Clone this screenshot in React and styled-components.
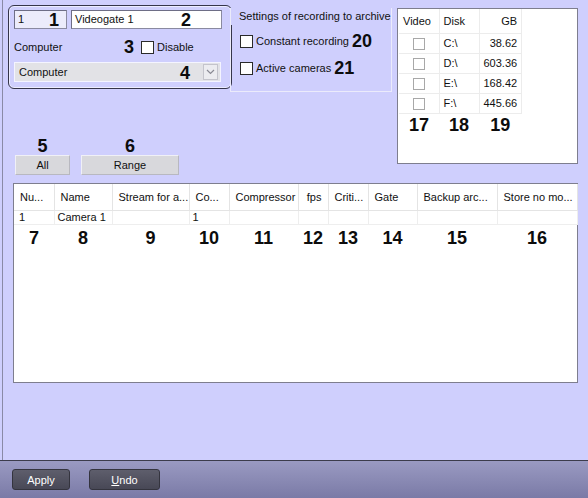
import React from "react";
import styled, { createGlobalStyle } from "styled-components";

const GlobalStyle = createGlobalStyle`
  html, body {
    margin: 0;
    padding: 0;
    background: #cfcffd;
  }
  * {
    box-sizing: border-box;
  }
`;

const Page = styled.div`
  width: 588px;
  height: 498px;
  display: flex;
  flex-direction: column;
  background: #cfcffd;
  font-family: "Liberation Sans", Arial, sans-serif;
  font-size: 11px;
  color: #111;
  overflow: hidden;
`;

const Main = styled.div`
  flex: 1;
  margin-left: 2px;
  border-left: 1px solid #8a8aa6;
  padding: 5px 10px 0 5px;
  display: flex;
  flex-direction: column;
`;

const TopArea = styled.div`
  display: flex;
  align-items: flex-start;
`;

const LeftCol = styled.div`
  display: flex;
  flex-direction: column;
  width: 384px;
`;

const TopRow = styled.div`
  display: flex;
  align-items: flex-start;
`;

const GroupBox = styled.div`
  width: 224px;
  height: 84px;
  border: 1px solid #35354a;
  border-radius: 6px;
  box-shadow: inset 0 0 0 1px #ececff;
  padding: 4px 0 0 5px;
  display: flex;
  flex-direction: column;
`;

const InputRow = styled.div`
  display: flex;
  gap: 4px;
`;

const TextInput = styled.div`
  position: relative;
  width: ${(p) => p.$w}px;
  height: 19px;
  background: ${(p) => (p.$tinted ? "#ececfb" : "#fff")};
  border: 1px solid #8a8aa0;
  border-top-color: #6e6e86;
  border-left-color: #6e6e86;
  padding: 2px 3px;
  font-size: 11px;
  line-height: 13px;
`;

const Num = styled.span`
  font-family: "Liberation Sans", Arial, sans-serif;
  font-weight: bold;
  font-size: 18px;
  line-height: 18px;
  color: #0c0c0c;
`;

const InlineNum = styled(Num)`
  position: absolute;
  right: ${(p) => p.$r}px;
  top: 0px;
`;

const CompRow = styled.div`
  display: flex;
  align-items: center;
  height: 22px;
  margin-top: 7px;
`;

const CompLabel = styled.span`
  width: 110px;
`;

const Check = styled.span`
  display: inline-block;
  width: 13px;
  height: 13px;
  background: #fff;
  border: 1px solid #2a2a2a;
  margin-right: 3px;
  flex-shrink: 0;
`;

const Select = styled.div`
  position: relative;
  width: 207px;
  height: 20px;
  margin-top: 4px;
  background: #e2e2e6;
  border: 1px solid #f4f4ff;
  display: flex;
  align-items: center;
  padding-left: 4px;
`;

const ArrowBox = styled.span`
  position: absolute;
  right: 2px;
  top: 1px;
  width: 15px;
  height: 16px;
  border: 1px solid #c4c4cc;
  background: #ececf0;
  display: flex;
  align-items: center;
  justify-content: center;
`;

const Settings = styled.fieldset`
  margin: 3px 0 0 -2px;
  width: 162px;
  height: 84px;
  border: 1px solid #ebebfb;
  border-top: none;
  padding: 0 0 0 9px;
  min-width: 0;
`;

const Legend = styled.div`
  margin: 0 0 0 -9px;
  padding: 2px 0 0 8px;
  height: 17px;
  white-space: nowrap;
  background: #cfcffd;
`;

const CheckLine = styled.div`
  display: flex;
  align-items: center;
  height: 18px;
  margin-top: ${(p) => p.$mt}px;
  white-space: nowrap;
  span.lbl {
    margin-right: 3px;
  }
`;

const ButtonsRow = styled.div`
  display: flex;
  gap: 11px;
  margin: 45px 0 0 7px;
`;

const ButtonGroup = styled.div`
  display: flex;
  flex-direction: column;
  align-items: center;
`;

const GrayButton = styled.div`
  width: ${(p) => p.$w}px;
  height: 20px;
  background: #d8d8dc;
  border: 1px solid #b8b8c0;
  border-top-color: #f0f0f6;
  border-left-color: #f0f0f6;
  display: flex;
  align-items: center;
  justify-content: center;
`;

const DiskPanel = styled.div`
  margin: 3px 0 0 5px;
  width: 181px;
  height: 156px;
  background: #fff;
  border: 1px solid #7e7e8e;
  padding: 0 0 0 1px;
`;

const DiskTable = styled.table`
  border-collapse: collapse;
  font-size: 11px;
  td, th {
    width: 40px;
    padding: 0 4px;
    font-weight: normal;
    border-right: 1px solid #ececec;
    border-bottom: 1px solid #ececec;
  }
  th {
    height: 24px;
    text-align: left;
  }
  td {
    height: 20px;
  }
  .r {
    text-align: right;
  }
  .c {
    text-align: center;
  }
  tr.nums td {
    border: none;
    height: 24px;
    text-align: center;
  }
`;

const SmallCheck = styled.span`
  display: inline-block;
  width: 12px;
  height: 12px;
  border: 1px solid #a8a8a8;
  background: #fff;
  vertical-align: middle;
`;

const CameraPanel = styled.div`
  margin: 8px 0 0 5px;
  height: 200px;
  background: #fff;
  border: 1px solid #7e7e8e;
`;

const CameraTable = styled.table`
  border-collapse: collapse;
  table-layout: fixed;
  width: 563px;
  font-size: 11px;
  th {
    height: 26px;
    font-weight: normal;
    text-align: left;
    padding: 0 0 0 6px;
    white-space: nowrap;
    border-right: 1px solid #e4e4e4;
    border-bottom: 1px solid #e4e4e4;
  }
  td {
    height: 14px;
    padding: 0 0 0 3px;
    border-right: 1px solid #eeeeee;
    border-bottom: 1px solid #eeeeee;
  }
  td:first-child {
    padding-left: 5px;
  }
  th.right {
    text-align: right;
    padding-right: 6px;
  }
  tr.nums td {
    height: 28px;
    padding: 0;
    border: none;
    text-align: center;
  }
`;

const BottomBar = styled.div`
  height: 38px;
  border-top: 1px solid #3c3c4c;
  background: linear-gradient(#9a9ac2, #7a7aa6);
  display: flex;
  align-items: flex-start;
  gap: 19px;
  padding: 8px 0 0 12px;
`;

const DarkButton = styled.div`
  width: ${(p) => p.$w}px;
  height: 21px;
  border-radius: 3px;
  border: 1px solid #34343e;
  background: linear-gradient(#5e5e6c, #484856);
  color: #fff;
  display: flex;
  align-items: center;
  justify-content: center;
  font-size: 11px;
  u {
    text-decoration: underline;
  }
`;

const cameraCols = [
  { title: "Nu...", w: 40 },
  { title: "Name", w: 58 },
  { title: "Stream for a...", w: 77 },
  { title: "Co...", w: 40 },
  { title: "Compressor", w: 69 },
  { title: "fps", w: 30, right: true },
  { title: "Criti...", w: 40 },
  { title: "Gate", w: 49 },
  { title: "Backup arc...", w: 80 },
  { title: "Store no mo...", w: 80 },
];

const cameraRow = ["1", "Camera 1", "", "1", "", "", "", "", "", ""];

const disks = [
  { disk: "C:\\", gb: "38.62" },
  { disk: "D:\\", gb: "603.36" },
  { disk: "E:\\", gb: "168.42" },
  { disk: "F:\\", gb: "445.66" },
];

export default function App() {
  return (
    <>
      <GlobalStyle />
      <Page>
        <Main>
          <TopArea>
            <LeftCol>
              <TopRow>
                <GroupBox>
                  <InputRow>
                    <TextInput $w={53} $tinted>
                      1<InlineNum $r={7}>1</InlineNum>
                    </TextInput>
                    <TextInput $w={151}>
                      Videogate 1<InlineNum $r={30}>2</InlineNum>
                    </TextInput>
                  </InputRow>
                  <CompRow>
                    <CompLabel>Computer</CompLabel>
                    <Num style={{ marginRight: 7 }}>3</Num>
                    <Check />
                    Disable
                  </CompRow>
                  <Select>
                    Computer
                    <InlineNum $r={30} style={{ top: 1 }}>4</InlineNum>
                    <ArrowBox>
                      <svg width="9" height="6" viewBox="0 0 9 6">
                        <path d="M1 1 L4.5 4.5 L8 1" fill="none" stroke="#8a8a94" strokeWidth="1.2" />
                      </svg>
                    </ArrowBox>
                  </Select>
                </GroupBox>
                <Settings>
                  <Legend>Settings of recording to archive</Legend>
                  <CheckLine $mt={7}>
                    <Check />
                    <span className="lbl">Constant recording</span>
                    <Num>20</Num>
                  </CheckLine>
                  <CheckLine $mt={9}>
                    <Check />
                    <span className="lbl">Active cameras</span>
                    <Num>21</Num>
                  </CheckLine>
                </Settings>
              </TopRow>
              <ButtonsRow>
                <ButtonGroup>
                  <Num>5</Num>
                  <GrayButton $w={55}>All</GrayButton>
                </ButtonGroup>
                <ButtonGroup>
                  <Num>6</Num>
                  <GrayButton $w={98}>Range</GrayButton>
                </ButtonGroup>
              </ButtonsRow>
            </LeftCol>
            <DiskPanel>
              <DiskTable>
                <thead>
                  <tr>
                    <th>Video</th>
                    <th>Disk</th>
                    <th className="r">GB</th>
                  </tr>
                </thead>
                <tbody>
                  {disks.map((d) => (
                    <tr key={d.disk}>
                      <td className="c">
                        <SmallCheck />
                      </td>
                      <td>{d.disk}</td>
                      <td className="r">{d.gb}</td>
                    </tr>
                  ))}
                  <tr className="nums">
                    <td>
                      <Num>17</Num>
                    </td>
                    <td>
                      <Num>18</Num>
                    </td>
                    <td>
                      <Num>19</Num>
                    </td>
                  </tr>
                </tbody>
              </DiskTable>
            </DiskPanel>
          </TopArea>
          <CameraPanel>
            <CameraTable>
              <colgroup>
                {cameraCols.map((c) => (
                  <col key={c.title} style={{ width: c.w }} />
                ))}
              </colgroup>
              <thead>
                <tr>
                  {cameraCols.map((c) => (
                    <th key={c.title} className={c.right ? "right" : ""}>
                      {c.title}
                    </th>
                  ))}
                </tr>
              </thead>
              <tbody>
                <tr>
                  {cameraRow.map((v, i) => (
                    <td key={i}>{v}</td>
                  ))}
                </tr>
                <tr className="nums">
                  {cameraCols.map((c, i) => (
                    <td key={c.title}>
                      <Num>{i + 7}</Num>
                    </td>
                  ))}
                </tr>
              </tbody>
            </CameraTable>
          </CameraPanel>
        </Main>
        <BottomBar>
          <DarkButton $w={58}>Apply</DarkButton>
          <DarkButton $w={71}>
            <u>U</u>ndo
          </DarkButton>
        </BottomBar>
      </Page>
    </>
  );
}
